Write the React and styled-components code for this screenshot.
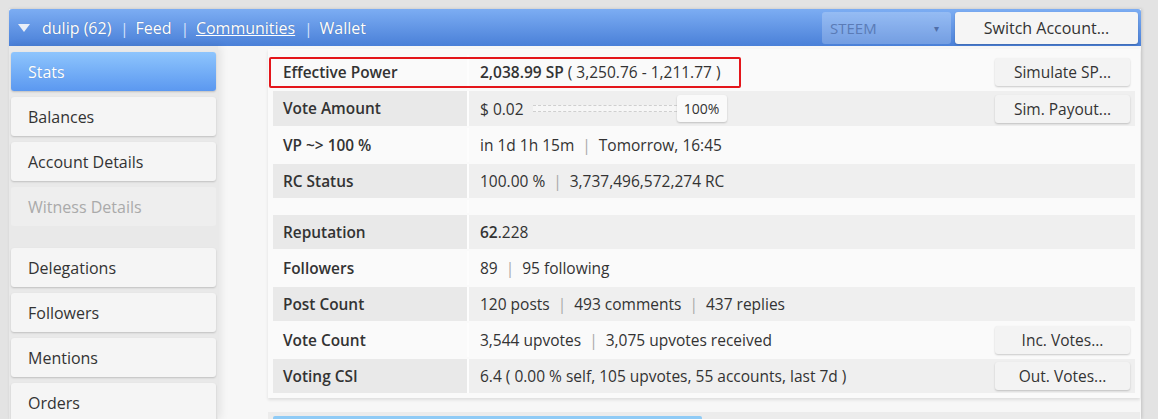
import React from 'react';
import styled, { createGlobalStyle } from 'styled-components';

const GlobalStyle = createGlobalStyle`
	html, body {
		margin: 0;
		padding: 0;
		background: #e3e3e3;
		font-family: "Open Sans", "Noto Sans", sans-serif;
		color: #333;
		overflow: hidden;
	}
`;

const Frame = styled.div`
	width: 1132px;
	margin: 9px 0 0 9px;
	height: 410px;
	display: flex;
	flex-direction: column;
	background: #f7f7f7;
	box-shadow: 1px 0 3px rgba(0, 0, 0, 0.15);
	overflow: hidden;
`;

const TopBar = styled.div`
	height: 37px;
	flex-shrink: 0;
	display: flex;
	align-items: center;
	padding: 0 3px 0 9px;
	background: linear-gradient(#7cadf3, #4a80d8);
	border-radius: 3px 3px 0 0;
	box-sizing: border-box;
	color: #fff;
	font-size: 16px;
`;

const Caret = styled.span`
	width: 0;
	height: 0;
	border-left: 6px solid transparent;
	border-right: 6px solid transparent;
	border-top: 8px solid #e8eef8;
	margin-right: 12px;
`;

const NavLink = styled.span`
	text-decoration: ${props => props.underline ? 'underline' : 'none'};
	text-shadow: 0 0 1px rgba(0, 0, 0, 0.3);
`;

const NavSep = styled.span`
	margin: 0 7px 0 9px;
	color: #dbe6fa;
	font-size: 15px;
`;

const Spacer = styled.div`
	flex: 1;
`;

const Select = styled.div`
	width: 129px;
	height: 32px;
	box-sizing: border-box;
	display: flex;
	align-items: center;
	justify-content: space-between;
	padding: 0 12px 0 8px;
	background: rgba(255, 255, 255, 0.22);
	border-radius: 3px;
	color: #5a7bb6;
	font-size: 15px;
	margin-right: 4px;

	&::after {
		content: '▾';
		font-size: 10px;
		color: #4f6ea8;
	}
`;

const TopButton = styled.div`
	width: 183px;
	height: 32px;
	display: flex;
	align-items: center;
	justify-content: center;
	background: #f5f5f5;
	border-radius: 3px;
	color: #333;
	font-size: 16px;
	box-shadow: 0 1px 2px rgba(0, 0, 0, 0.2);
`;

const Body = styled.div`
	flex: 1;
	display: flex;
	min-height: 0;
`;

const Sidebar = styled.div`
	width: 209px;
	flex-shrink: 0;
	background: #e9e9e9;
	padding: 6px 2px 0;
	box-sizing: border-box;
	display: flex;
	flex-direction: column;
	gap: 6px;
	box-shadow: 3px 0 8px rgba(0, 0, 0, 0.08);
	z-index: 1;
`;

const SideItem = styled.div`
	height: 39px;
	flex-shrink: 0;
	display: flex;
	align-items: center;
	padding-left: 17px;
	border-radius: 3px;
	font-size: 16px;
	background: ${props => props.active
		? 'linear-gradient(#8ec5fd, #5b98f0)'
		: props.disabled ? '#eeeeee' : '#f5f5f5'};
	color: ${props => props.active ? '#fff' : props.disabled ? '#aaa' : '#333'};
	box-shadow: ${props => props.disabled ? 'none' : '0 1px 2px rgba(0, 0, 0, 0.18)'};
	text-shadow: ${props => props.active ? '0 0 1px rgba(0,0,0,0.2)' : 'none'};
`;

const SideGap = styled.div`
	height: 10px;
	flex-shrink: 0;
`;

const Main = styled.div`
	flex: 1;
	padding: 3px 1px 0 50px;
	display: flex;
	flex-direction: column;
	gap: 14px;
`;

const Card = styled.div`
	position: relative;
	background: #fafafa;
	padding: 6px 5px 5px;
	box-shadow: 0 2px 3px rgba(0, 0, 0, 0.1);
	display: flex;
	flex-direction: column;
	gap: 2px;
`;

const Highlight = styled.div`
	position: absolute;
	left: 1px;
	top: 8px;
	width: 468px;
	height: 27px;
	border: 2px solid #e4161b;
	border-radius: 2px;
	pointer-events: none;
`;

const Row = styled.div`
	display: grid;
	grid-template-columns: 194px 1fr;
	column-gap: 2px;
	height: ${props => props.spacer ? '13px' : props.tall ? '35px' : '34px'};
	background: #fdfdfd;
`;

const Label = styled.div`
	display: flex;
	align-items: center;
	padding-left: 10px;
	font-size: 15.4px;
	font-weight: 600;
	color: #333;
	background: ${props => props.dark ? '#e9e9e9' : '#fafafa'};
`;

const Value = styled.div`
	display: flex;
	align-items: center;
	padding: 0 5px 0 11px;
	font-size: 15.5px;
	color: #333;
	background: ${props => props.dark ? '#efefef' : '#fafafa'};
`;

const Bold = styled.span`
	font-weight: 600;
`;

const Sep = styled.span`
	color: #aaa;
	margin: 0 8px;
`;

const RowButton = styled.div`
	margin-left: auto;
	width: 135px;
	height: 28px;
	display: flex;
	align-items: center;
	justify-content: center;
	background: #f3f3f3;
	border-radius: 3px;
	font-size: 15.5px;
	color: #333;
	box-shadow: 0 1px 2px rgba(0, 0, 0, 0.2);
`;

const Slider = styled.div`
	display: flex;
	align-items: center;
	margin-left: 9px;
`;

const Track = styled.div`
	width: 144px;
	height: 5px;
	background: #f6f6f6;
	border-top: 1px dashed #cfcfcf;
	border-bottom: 1px dashed #cfcfcf;
`;

const Handle = styled.div`
	width: 50px;
	height: 27px;
	display: flex;
	align-items: center;
	justify-content: center;
	background: #fafafa;
	border-radius: 3px;
	font-size: 14px;
	color: #333;
	box-shadow: 0 1px 2px rgba(0, 0, 0, 0.2);
`;

const NextCard = styled.div`
	background: #ececec;
	height: 30px;
	padding: 4px 5px 0;
	box-sizing: border-box;
`;

const ProgressBar = styled.div`
	width: 429px;
	height: 6px;
	background: #8fcbf6;
	border-radius: 2px;
`;

const sideItems = [
	{ name: 'Stats', active: true },
	{ name: 'Balances' },
	{ name: 'Account Details' },
	{ name: 'Witness Details', disabled: true },
	{ gap: true },
	{ name: 'Delegations' },
	{ name: 'Followers' },
	{ name: 'Mentions' },
	{ name: 'Orders' },
];

const App = () => {
	return (
		<>
			<GlobalStyle />
			<Frame>
				<TopBar>
					<Caret />
					<NavLink>dulip (62)</NavLink>
					<NavSep>|</NavSep>
					<NavLink>Feed</NavLink>
					<NavSep>|</NavSep>
					<NavLink underline>Communities</NavLink>
					<NavSep>|</NavSep>
					<NavLink>Wallet</NavLink>
					<Spacer />
					<Select>STEEM</Select>
					<TopButton>Switch Account...</TopButton>
				</TopBar>
				<Body>
					<Sidebar>
						{sideItems.map((item, i) => item.gap
							? <SideGap key={i} />
							: <SideItem key={i} active={item.active} disabled={item.disabled}>{item.name}</SideItem>
						)}
					</Sidebar>
					<Main>
						<Card>
							<Row>
								<Label>Effective Power</Label>
								<Value>
									<Bold>2,038.99 SP</Bold>&nbsp;( 3,250.76 - 1,211.77 )
									<RowButton>Simulate SP...</RowButton>
								</Value>
							</Row>
							<Row tall>
								<Label dark>Vote Amount</Label>
								<Value dark>
									$ 0.02
									<Slider>
										<Track />
										<Handle>100%</Handle>
									</Slider>
									<RowButton>Sim. Payout...</RowButton>
								</Value>
							</Row>
							<Row>
								<Label>VP ~&gt; 100 %</Label>
								<Value>in 1d 1h 15m<Sep>|</Sep>Tomorrow, 16:45</Value>
							</Row>
							<Row>
								<Label dark>RC Status</Label>
								<Value dark>100.00 %<Sep>|</Sep>3,737,496,572,274 RC</Value>
							</Row>
							<Row spacer>
								<Label />
								<Value />
							</Row>
							<Row>
								<Label dark>Reputation</Label>
								<Value dark><Bold>62</Bold>.228</Value>
							</Row>
							<Row>
								<Label>Followers</Label>
								<Value>89<Sep>|</Sep>95 following</Value>
							</Row>
							<Row>
								<Label dark>Post Count</Label>
								<Value dark>120 posts<Sep>|</Sep>493 comments<Sep>|</Sep>437 replies</Value>
							</Row>
							<Row>
								<Label>Vote Count</Label>
								<Value>
									3,544 upvotes<Sep>|</Sep>3,075 upvotes received
									<RowButton>Inc. Votes...</RowButton>
								</Value>
							</Row>
							<Row>
								<Label dark>Voting CSI</Label>
								<Value dark>
									6.4 ( 0.00 % self, 105 upvotes, 55 accounts, last 7d )
									<RowButton>Out. Votes...</RowButton>
								</Value>
							</Row>
							<Highlight />
						</Card>
						<NextCard>
							<ProgressBar />
						</NextCard>
					</Main>
				</Body>
			</Frame>
		</>
	);
};

export default App;
